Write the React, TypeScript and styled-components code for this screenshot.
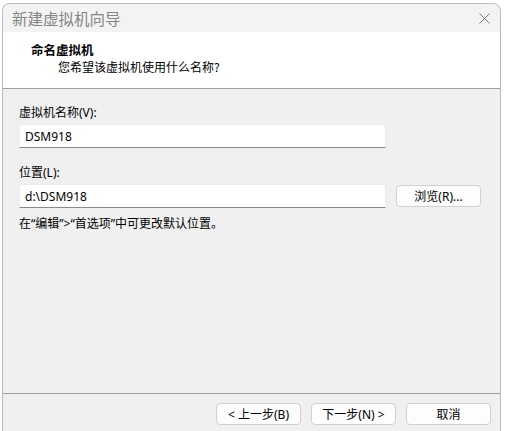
import styled, { createGlobalStyle } from 'styled-components';

const GlobalStyle = createGlobalStyle`
  html, body {
    margin: 0;
    padding: 0;
    background: #ffffff;
    overflow: hidden;
  }
  body {
    font-family: "Noto Sans", "Noto Sans CJK SC", sans-serif;
    font-size: 12px;
    color: #000000;
  }
`;

function CloseIcon() {
  return (
    <svg width="11" height="11" viewBox="0 0 11 11">
      <path d="M0.5 0.5 L10.5 10.5 M10.5 0.5 L0.5 10.5" stroke="#7a7a7a" strokeWidth="1" fill="none" />
    </svg>
  );
}

function App() {
  return (
    <>
      <GlobalStyle />
      <Window>
        <TitleBar>
          <TitleText>新建虚拟机向导</TitleText>
          <CloseButton>
            <CloseIcon />
          </CloseButton>
        </TitleBar>

        <Header>
          <HeaderTitle>命名虚拟机</HeaderTitle>
          <HeaderSub>您希望该虚拟机使用什么名称?</HeaderSub>
        </Header>

        <Content>
          <Field $gap={17}>
            <Label>虚拟机名称(V):</Label>
            <Row>
              <TextInput>DSM918</TextInput>
            </Row>
          </Field>

          <Field $gap={8}>
            <Label>位置(L):</Label>
            <Row>
              <TextInput>d:\DSM918</TextInput>
              <Button $width={85}>浏览(R)...</Button>
            </Row>
          </Field>

          <Hint>在“编辑”&gt;“首选项”中可更改默认位置。</Hint>
        </Content>

        <Footer>
          <Button $width={85}>&lt; 上一步(B)</Button>
          <Button $width={85}>下一步(N) &gt;</Button>
          <Button $width={85}>取消</Button>
        </Footer>
      </Window>
    </>
  );
}

const Window = styled.div`
  margin: 3px 0 0 2px;
  width: 499px;
  height: 440px;
  box-sizing: border-box;
  border: 1px solid #bcbcbc;
  border-bottom: none;
  border-radius: 8px 8px 0 0;
  background: #f0f0f0;
  display: flex;
  flex-direction: column;
  overflow: hidden;
`;

const TitleBar = styled.div`
  height: 28px;
  display: flex;
  align-items: center;
  justify-content: space-between;
  padding: 0 10px 0 9px;
  background: #f3f3f3;
`;

const TitleText = styled.div`
  font-family: "Noto Sans CJK SC", sans-serif;
  font-size: 15.5px;
  color: #858585;
  line-height: 20px;
`;

const CloseButton = styled.div`
  display: flex;
  align-items: center;
  justify-content: center;
  width: 12px;
  height: 12px;
  margin-top: 1px;
`;

const Header = styled.div`
  height: 57px;
  box-sizing: border-box;
  background: #ffffff;
  border-bottom: 1px solid #a0a0a0;
  padding: 9px 0 0 28px;
  font-family: "Noto Sans CJK SC", sans-serif;
  line-height: 17px;
`;

const HeaderTitle = styled.div`
  font-weight: 700;
  font-size: 12.5px;
`;

const HeaderSub = styled.div`
  padding-left: 27px;
  font-size: 12px;
`;

const Content = styled.div`
  height: 304px;
  box-sizing: border-box;
  padding: 16px 0 0 16px;
  display: flex;
  flex-direction: column;
`;

const Field = styled.div<{ $gap: number }>`
  display: flex;
  flex-direction: column;
  margin-bottom: ${(p) => p.$gap}px;
`;

const Label = styled.div`
  font-family: "Noto Sans", "Noto Sans CJK SC", sans-serif;
  font-size: 12px;
  line-height: 16px;
  margin-bottom: 3px;
`;

const Row = styled.div`
  display: flex;
  align-items: center;
  gap: 10px;
`;

const TextInput = styled.div`
  width: 367px;
  height: 24px;
  box-sizing: border-box;
  background: #ffffff;
  border: 1px solid #ececec;
  border-bottom: 1px solid #8a8a8a;
  border-radius: 3px 3px 0 0;
  padding: 0 5px;
  display: flex;
  align-items: center;
  font-size: 12px;
`;

const Button = styled.div<{ $width: number }>`
  width: ${(p) => p.$width}px;
  height: 22px;
  box-sizing: border-box;
  background: #fdfdfd;
  border: 1px solid #d0d0d0;
  border-radius: 4px;
  display: flex;
  align-items: center;
  justify-content: center;
  font-family: "Noto Sans", "Noto Sans CJK SC", sans-serif;
  font-size: 12px;
`;

const Hint = styled.div`
  font-size: 12px;
  line-height: 16px;
`;

const Footer = styled.div`
  border-top: 1px solid #a0a0a0;
  display: flex;
  justify-content: flex-end;
  gap: 10px;
  padding: 9px 9px 0 0;
`;

export default App;
